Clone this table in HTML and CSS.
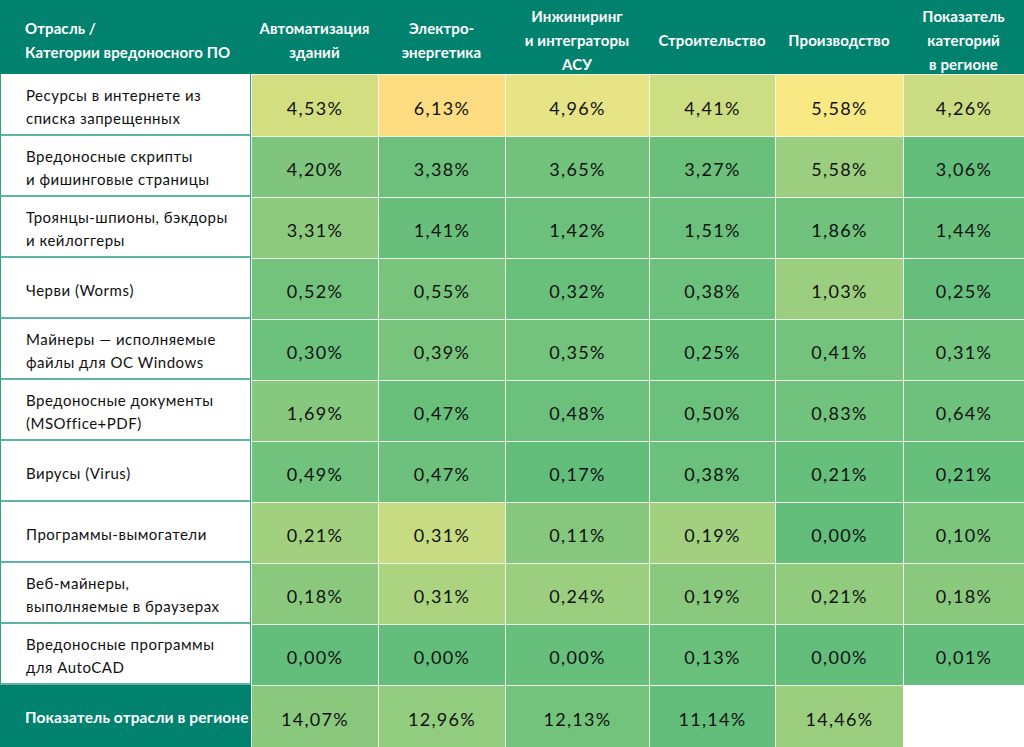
FILE: index.html
```html
<!DOCTYPE html>
<html lang="ru">
<head>
<meta charset="utf-8">
<title>Категории вредоносного ПО по отраслям</title>
<link rel="stylesheet" href="styles.css">
</head>
<body>
<div class="grid">
  <div class="hd hd-first">Отрасль /<br>Категории вредоносного ПО</div>
  <div class="hd">Автоматизация<br>зданий</div>
  <div class="hd">Электро-<br>энергетика</div>
  <div class="hd">Инжиниринг<br>и интеграторы<br>АСУ</div>
  <div class="hd">Строительство</div>
  <div class="hd">Производство</div>
  <div class="hd">Показатель<br>категорий<br>в регионе</div>

  <div class="lb">Ресурсы в интернете из<br>списка запрещенных</div>
  <div class="v" style="background:#D3DE81">4,53%</div>
  <div class="v" style="background:#FEDD82">6,13%</div>
  <div class="v" style="background:#E6E484">4,96%</div>
  <div class="v" style="background:#CDDD82">4,41%</div>
  <div class="v" style="background:#F9E984">5,58%</div>
  <div class="v" style="background:#CBDC82">4,26%</div>

  <div class="lb">Вредоносные скрипты<br>и фишинговые страницы</div>
  <div class="v" style="background:#7FC57D">4,20%</div>
  <div class="v" style="background:#6CC07B">3,38%</div>
  <div class="v" style="background:#73C27C">3,65%</div>
  <div class="v" style="background:#6ABF7B">3,27%</div>
  <div class="v" style="background:#9BCE7E">5,58%</div>
  <div class="v" style="background:#63BE7B">3,06%</div>

  <div class="lb">Троянцы-шпионы, бэкдоры<br>и кейлоггеры</div>
  <div class="v" style="background:#8DCA7D">3,31%</div>
  <div class="v" style="background:#68BF7B">1,41%</div>
  <div class="v" style="background:#6BC07B">1,42%</div>
  <div class="v" style="background:#6BC07B">1,51%</div>
  <div class="v" style="background:#70C27C">1,86%</div>
  <div class="v" style="background:#68BF7B">1,44%</div>

  <div class="lb">Черви (Worms)</div>
  <div class="v" style="background:#74C37C">0,52%</div>
  <div class="v" style="background:#78C47C">0,55%</div>
  <div class="v" style="background:#69C07B">0,32%</div>
  <div class="v" style="background:#6CC17C">0,38%</div>
  <div class="v" style="background:#9BCE7E">1,03%</div>
  <div class="v" style="background:#65BE7B">0,25%</div>

  <div class="lb">Майнеры — исполняемые<br>файлы для ОС Windows</div>
  <div class="v" style="background:#6CC17C">0,30%</div>
  <div class="v" style="background:#78C47C">0,39%</div>
  <div class="v" style="background:#74C37C">0,35%</div>
  <div class="v" style="background:#69C07B">0,25%</div>
  <div class="v" style="background:#74C37C">0,41%</div>
  <div class="v" style="background:#70C27C">0,31%</div>

  <div class="lb">Вредоносные документы<br>(MSOffice+PDF)</div>
  <div class="v" style="background:#86C87D">1,69%</div>
  <div class="v" style="background:#69C07B">0,47%</div>
  <div class="v" style="background:#6BC07B">0,48%</div>
  <div class="v" style="background:#6BC07B">0,50%</div>
  <div class="v" style="background:#70C27C">0,83%</div>
  <div class="v" style="background:#6EC17C">0,64%</div>

  <div class="lb">Вирусы (Virus)</div>
  <div class="v" style="background:#70C27C">0,49%</div>
  <div class="v" style="background:#6EC17C">0,47%</div>
  <div class="v" style="background:#63BE7B">0,17%</div>
  <div class="v" style="background:#6BC07B">0,38%</div>
  <div class="v" style="background:#66BF7B">0,21%</div>
  <div class="v" style="background:#66BF7B">0,21%</div>

  <div class="lb">Программы-вымогатели</div>
  <div class="v" style="background:#A1D07F">0,21%</div>
  <div class="v" style="background:#C6DB82">0,31%</div>
  <div class="v" style="background:#85C87D">0,11%</div>
  <div class="v" style="background:#A1D07F">0,19%</div>
  <div class="v" style="background:#63BE7B">0,00%</div>
  <div class="v" style="background:#7CC57C">0,10%</div>

  <div class="lb">Веб-майнеры,<br>выполняемые в браузерах</div>
  <div class="v" style="background:#8AC97D">0,18%</div>
  <div class="v" style="background:#ACD37F">0,31%</div>
  <div class="v" style="background:#9BCE7E">0,24%</div>
  <div class="v" style="background:#8AC97D">0,19%</div>
  <div class="v" style="background:#90CB7E">0,21%</div>
  <div class="v" style="background:#8AC97D">0,18%</div>

  <div class="lb">Вредоносные программы<br>для AutoCAD</div>
  <div class="v" style="background:#63BE7B">0,00%</div>
  <div class="v" style="background:#63BE7B">0,00%</div>
  <div class="v" style="background:#66BF7B">0,00%</div>
  <div class="v" style="background:#69C07B">0,13%</div>
  <div class="v" style="background:#63BE7B">0,00%</div>
  <div class="v" style="background:#63BE7B">0,01%</div>

  <div class="lb lb-total">Показатель отрасли в регионе</div>
  <div class="v" style="background:#8AC97D">14,07%</div>
  <div class="v" style="background:#92CC7E">12,96%</div>
  <div class="v" style="background:#73C37C">12,13%</div>
  <div class="v" style="background:#63BE7B">11,14%</div>
  <div class="v" style="background:#9BCE7E">14,46%</div>
  <div class="v v-empty"></div>
</div>
</body>
</html>
```

FILE: styles.css
```css
html, body {
  margin: 0;
  padding: 0;
  background: #ffffff;
}

body {
  font-family: Lato, "Open Sans", "Noto Sans", sans-serif;
  width: 1024px;
  height: 747px;
  overflow: hidden;
}

.grid {
  display: grid;
  grid-template-columns: 251px 127px 127px 144px 126px 128px 121px;
  grid-template-rows: 74px 62px repeat(9, 61px) 62px;
}

.hd {
  background: #00826E;
  color: #ffffff;
  font-weight: 700;
  font-size: 15px;
  line-height: 24px;
  letter-spacing: 0.1px;
  display: flex;
  align-items: center;
  justify-content: center;
  text-align: center;
  padding-top: 6px;
  box-sizing: border-box;
}

.hd-first {
  justify-content: flex-start;
  text-align: left;
  padding-left: 25px;
}

.lb {
  background: #ffffff;
  color: #111111;
  font-size: 15px;
  line-height: 23px;
  display: flex;
  align-items: center;
  padding-left: 25px;
  padding-top: 5px;
  box-sizing: border-box;
  border-left: 1px solid #2f9f88;
  border-right: 1px solid #2f9f88;
  border-bottom: 2px solid #5cb6a2;
  letter-spacing: 0.5px;
}

.lb-total {
  background: #00826E;
  color: #ffffff;
  font-weight: 700;
  font-size: 15.5px;
  padding-top: 2px;
  border: none;
  letter-spacing: 0.1px;
}

.v {
  display: flex;
  align-items: center;
  justify-content: center;
  font-size: 18px;
  color: #111111;
  letter-spacing: 1.3px;
  padding-top: 4px;
  box-sizing: border-box;
  border-left: 1px solid #eef6ea;
  border-top: 1px solid #eef6ea;
}

.v-empty {
  background: #ffffff;
  border: none;
}
```
